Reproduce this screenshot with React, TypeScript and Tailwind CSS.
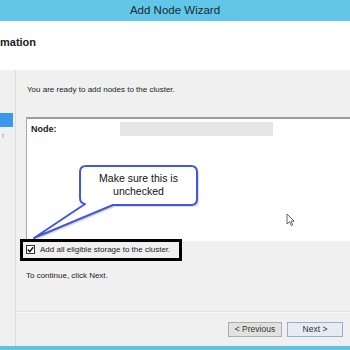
import React from 'react';

const font = { fontFamily: '"Liberation Sans", Arial, sans-serif' };

const Callout: React.FC = () => (
    <>
        <svg className="absolute left-0 top-0" width="350" height="350" viewBox="0 0 350 350">
            <path
                d="M86 166 H191 Q197 166 197 172 V199 Q197 205 191 205 H113 L34 238 L85 204 Q80 203 80 198 V172 Q80 166 86 166 Z"
                fill="#b9b9c4"
                transform="translate(2 2)"
                opacity="0.5"
            />
            <path
                d="M86 166 H191 Q197 166 197 172 V199 Q197 205 191 205 H113 L34 238 L85 204 Q80 203 80 198 V172 Q80 166 86 166 Z"
                fill="#ffffff"
                stroke="#4457dc"
                strokeWidth="2"
                strokeLinejoin="round"
            />
        </svg>
        <div className="absolute left-[80px] top-[172px] w-[117px] text-center text-[10.5px] leading-[13px] text-[#111]">
            Make sure this is
            <br />
            unchecked
        </div>
    </>
);

const Cursor: React.FC = () => (
    <svg className="absolute left-[286px] top-[213px]" width="10" height="14" viewBox="0 0 10 14">
        <path d="M1 1 V11 L3.5 8.8 L5.3 12.6 L6.8 11.9 L5 8.2 H8.2 Z" fill="#fff" stroke="#555" strokeWidth="0.9" strokeLinejoin="round" />
    </svg>
);

const App: React.FC = () => {
    return (
        <div className="relative w-[350px] h-[350px] overflow-hidden flex flex-col bg-[#f0f0f0] text-[#222] antialiased" style={font}>
            {/* title bar */}
            <div className="h-[21px] bg-[#62c6e8] flex items-center justify-center text-[11.5px] text-[#1b2a33]">
                Add Node Wizard
            </div>

            {/* page header */}
            <div className="h-[49px] bg-white pt-[14px] text-[11px] font-bold leading-[14px]">mation</div>

            <div className="flex-1 flex">
                {/* step list */}
                <div className="w-[16px] border-r border-[#dcdcdc] flex flex-col">
                    <div className="mt-[43px] h-[14px] w-[13px] bg-[#3a97ee]" />
                    <div className="mt-[4px] ml-[2px] text-[7px] leading-[10px] text-[#9a9a9a]">r</div>
                </div>

                <div className="flex-1 flex flex-col">
                    <p className="pt-[14px] pl-[11px] text-[8px] leading-[12px]">You are ready to add nodes to the cluster.</p>

                    <div className="mt-[21px] ml-[10px] h-[124px] bg-white border-t-2 border-l border-t-[#9d9d9d] border-l-[#a8a8a8]">
                        <div className="flex items-center pt-[3px]">
                            <span className="w-[93px] pl-[4px] text-[9px] font-bold leading-[14px]">Node:</span>
                            <div className="w-[153px] h-[14px] bg-[#e6e6e6]" />
                        </div>
                    </div>

                    <label className="mt-[4px] ml-[10px] flex items-center gap-[5px] text-[8px] leading-[9px]">
                        <span className="w-[9px] h-[9px] border border-[#333] bg-white flex items-center justify-center">
                            <svg width="7" height="7" viewBox="0 0 7 7">
                                <path d="M0.8 3.6 L2.8 5.6 L6.2 1.2" fill="none" stroke="#111" strokeWidth="1.4" />
                            </svg>
                        </span>
                        Add all eligible storage to the cluster.
                    </label>

                    <p className="mt-[16px] pl-[10px] text-[8px] leading-[12px]">To continue, click Next.</p>

                    <div className="mt-[29px] border-t border-[#e2e2e2] border-b border-b-[#fafafa]" />

                    <div className="flex justify-end gap-[5px] pt-[9px] pr-[7px] text-[8.5px]">
                        <button className="w-[54px] h-[15px] border border-[#adadad] bg-[#e1e1e1] text-[#333]">&lt; Previous</button>
                        <button className="w-[56px] h-[15px] border border-[#8fb2d0] bg-[#e5ecf3] text-[#333]">Next &gt;</button>
                    </div>
                </div>
            </div>

            <div className="h-[4px] bg-[#5ec3e3]" />

            <Callout />
            <div className="absolute left-[20px] top-[239px] w-[162px] h-[22px] border-[3px] border-black" />
            <Cursor />
        </div>
    );
};

export default App;
